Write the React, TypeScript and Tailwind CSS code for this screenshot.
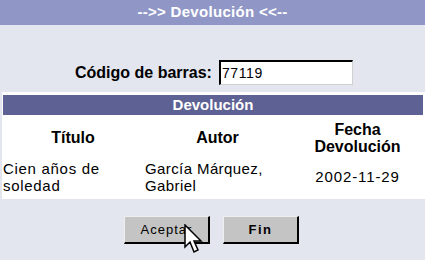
import React from 'react';

const Cursor = () => (
  <svg
    className="absolute left-[184px] top-[224px]"
    width="22"
    height="32"
    viewBox="0 0 22 32"
  >
    <path
      d="M1 1 L1 23 L6 18 L10 28 L14 26 L10 17 L17 17 Z"
      fill="#fff"
      stroke="#000"
      strokeWidth="1.5"
      strokeLinejoin="miter"
    />
  </svg>
);

const App = () => {
  return (
    <div
      className="relative w-[425px] h-[260px] bg-[#e3e6ef] overflow-hidden"
      style={{ fontFamily: '"Liberation Sans", Arial, sans-serif' }}
    >
      {/* Title bar */}
      <div className="h-[25px] bg-[#9097c6] flex items-center justify-center">
        <span className="text-white font-bold text-[15px] tracking-[0.3px]">
          --&gt;&gt; Devolución &lt;&lt;--
        </span>
      </div>

      {/* Barcode input */}
      <div className="h-[67px] flex items-start pt-[35px] pl-[75px]">
        <label className="font-bold text-[16px] text-black leading-[25px] mr-[7px]">
          Código de barras:
        </label>
        <div className="w-[134px] h-[25px] bg-white border-t-2 border-l-2 border-black border-r border-b border-r-[#d0d0d0] border-b-[#d0d0d0] flex items-center pl-[1px]">
          <span className="text-[14px] tracking-[0.6px] text-black">77119</span>
        </div>
      </div>

      {/* Result table */}
      <div className="ml-[2px] h-[107px] bg-white pt-[3px] pl-[1px] pr-[2px]">
        <div className="h-[20px] bg-[#5e6193] flex items-center justify-center">
          <span className="text-white font-bold text-[15px]">Devolución</span>
        </div>
        <div className="grid grid-cols-[140px_149px_1fr] text-black">
          <div className="h-[45px] flex items-center justify-center font-bold text-[16px]">
            Título
          </div>
          <div className="h-[45px] flex items-center justify-center font-bold text-[16px]">
            Autor
          </div>
          <div className="h-[45px] flex flex-col items-center justify-center font-bold text-[16px] leading-[17px]">
            <span>Fecha</span>
            <span>Devolución</span>
          </div>
          <div className="text-[15px] tracking-[0.7px] leading-[17px]">
            Cien años de
            <br />
            soledad
          </div>
          <div className="text-[15px] tracking-[0.4px] leading-[17px] pl-[2px]">
            García Márquez,
            <br />
            Gabriel
          </div>
          <div className="text-[15px] tracking-[0.9px] flex items-center justify-center">
            2002-11-29
          </div>
        </div>
      </div>

      {/* Buttons */}
      <div className="flex gap-[13px] pl-[124px] pt-[17px]">
        <button className="w-[86px] h-[28px] bg-[#c4c4c4] border-t border-l border-t-[#eeeeee] border-l-[#eeeeee] border-r-2 border-b-2 border-r-black border-b-black text-[13px] tracking-[1px] text-black">
          Aceptar
        </button>
        <button className="w-[76px] h-[28px] bg-[#c4c4c4] border-t border-l border-t-[#eeeeee] border-l-[#eeeeee] border-r-2 border-b-2 border-r-black border-b-black text-[13px] font-semibold tracking-[1.5px] text-black">
          Fin
        </button>
      </div>

      <Cursor />
    </div>
  );
};

export default App;
